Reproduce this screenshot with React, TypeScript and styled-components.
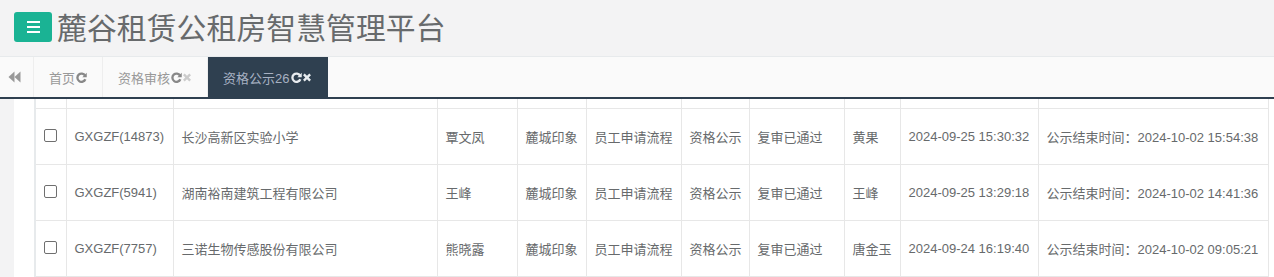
import React from "react";
import styled, { createGlobalStyle } from "styled-components";

const Global = createGlobalStyle`
  html, body { margin: 0; padding: 0; background: #ffffff; }
  body { font-family: "Liberation Sans", Arial, "Noto Sans CJK SC", sans-serif; color: #676a6c; overflow: hidden; }
  * { box-sizing: border-box; }
`;

const Page = styled.div`
  width: 1274px;
  height: 277px;
  display: flex;
  flex-direction: column;
  overflow: hidden;
`;

const Header = styled.div`
  height: 57px;
  background: #f3f3f4;
  border-bottom: 1px solid #e7eaec;
  display: flex;
  align-items: center;
  padding-left: 14px;
  padding-bottom: 2px;
  gap: 5px;
`;

const MenuButton = styled.div`
  width: 38px;
  height: 30px;
  background: #1ab394;
  border-radius: 3px;
  display: flex;
  flex-direction: column;
  align-items: center;
  justify-content: center;
  gap: 3px;
`;

const Bar = styled.span`
  display: block;
  width: 13px;
  height: 2px;
  background: #ffffff;
`;

const Title = styled.h1`
  margin: 0;
  font-family: "Noto Sans CJK SC", "Liberation Sans", sans-serif;
  font-weight: 400;
  font-size: 29.8px;
  letter-spacing: 0.1px;
  color: #676a6c;
  line-height: 1;
`;

const TabBar = styled.div`
  height: 42px;
  background: #fafafa;
  border-bottom: 2px solid #2f4050;
  display: flex;
`;

const BackButton = styled.div`
  width: 34px;
  border-right: 1px solid #eee;
  display: flex;
  align-items: center;
  justify-content: center;
  padding-right: 4px;
  color: #999;
`;

const Tab = styled.div<{ $active?: boolean }>`
  display: flex;
  align-items: center;
  padding: 0 15px;
  font-size: 13px;
  color: ${(p) => (p.$active ? "#a7b1c2" : "#999")};
  background: ${(p) => (p.$active ? "#2f4050" : "transparent")};
  border-right: 1px solid ${(p) => (p.$active ? "#2f4050" : "#eee")};
`;

const TabLabel = styled.span`
  font-family: "Liberation Sans", "Noto Sans CJK SC", sans-serif;
  margin-right: 1px;
`;

const Content = styled.div`
  flex: 1;
  display: flex;
  background: #f3f3f4;
`;

const Panel = styled.div`
  flex: 1;
  background: #ffffff;
  margin-left: 14px;
  padding-left: 20px;
`;

const Table = styled.table`
  border-collapse: collapse;
  table-layout: fixed;
  width: 1233px;
  font-size: 13px;
  color: #676a6c;
  border-left: 2px solid #e7eaec;
`;

const Td = styled.td<{ $top?: boolean }>`
  border: 1px solid #e7e7e7;
  height: ${(p) => (p.$top ? "9px" : "56px")};
  padding: 0 8px;
  white-space: nowrap;
  overflow: hidden;
  vertical-align: middle;
  font-family: "Liberation Sans", "Noto Sans CJK SC", sans-serif;
  border-top: ${(p) => (p.$top ? "none" : "1px solid #e7e7e7")};
`;

const Check = styled.span`
  display: block;
  width: 13px;
  height: 13px;
  border: 1px solid #6f6f6f;
  border-radius: 2px;
  margin: 0 0 2px 0;
`;

const Refresh = ({ color }: { color: string }) => (
  <svg width="11" height="11" viewBox="0 0 16 16">
    <path
      d="M13.2 5.2 A6 6 0 1 0 13.6 10.6"
      fill="none"
      stroke={color}
      strokeWidth="3.4"
    />
    <path d="M15.6 1.2 L15.6 7.6 L9.2 7.6 Z" fill={color} />
  </svg>
);

const Close = ({ color }: { color: string }) => (
  <svg width="10" height="9" viewBox="0 0 10 10">
    <path d="M1.5 1.5 L8.5 8.5 M8.5 1.5 L1.5 8.5" stroke={color} strokeWidth="2.6" />
  </svg>
);

const Backward = () => (
  <svg width="13" height="12" viewBox="0 0 13 12">
    <path d="M0.5 6 L6.5 0.5 L6.5 11.5 Z" fill="#999" />
    <path d="M6.5 6 L12.5 0.5 L12.5 11.5 Z" fill="#999" />
  </svg>
);

const widths = [31, 107, 264, 80, 69, 95, 68, 95, 56, 138, 230];

const rows = [
  ["GXGZF(14873)", "长沙高新区实验小学", "覃文凤", "麓城印象", "员工申请流程", "资格公示", "复审已通过", "黄果", "2024-09-25 15:30:32", "公示结束时间：2024-10-02 15:54:38"],
  ["GXGZF(5941)", "湖南裕南建筑工程有限公司", "王峰", "麓城印象", "员工申请流程", "资格公示", "复审已通过", "王峰", "2024-09-25 13:29:18", "公示结束时间：2024-10-02 14:41:36"],
  ["GXGZF(7757)", "三诺生物传感股份有限公司", "熊晓露", "麓城印象", "员工申请流程", "资格公示", "复审已通过", "唐金玉", "2024-09-24 16:19:40", "公示结束时间：2024-10-02 09:05:21"],
];

export default function App() {
  return (
    <Page>
      <Global />
      <Header>
        <MenuButton>
          <Bar />
          <Bar />
          <Bar />
        </MenuButton>
        <Title>麓谷租赁公租房智慧管理平台</Title>
      </Header>
      <TabBar>
        <BackButton>
          <Backward />
        </BackButton>
        <Tab>
          <TabLabel>首页</TabLabel>
          <Refresh color="#888" />
        </Tab>
        <Tab>
          <TabLabel>资格审核</TabLabel>
          <Refresh color="#888" />
          <Close color="#ccc" />
        </Tab>
        <Tab $active>
          <TabLabel>资格公示26</TabLabel>
          <Refresh color="#e8ecf0" />
          <Close color="#e8ecf0" />
        </Tab>
      </TabBar>
      <Content>
        <Panel>
          <Table>
            <colgroup>
              {widths.map((w, i) => (
                <col key={i} style={{ width: w }} />
              ))}
            </colgroup>
            <tbody>
              <tr>
                {widths.map((_, i) => (
                  <Td key={i} $top />
                ))}
              </tr>
              {rows.map((r, i) => (
                <tr key={i}>
                  <Td>
                    <Check />
                  </Td>
                  {r.map((c, j) => (
                    <Td key={j}>{c}</Td>
                  ))}
                </tr>
              ))}
            </tbody>
          </Table>
        </Panel>
      </Content>
    </Page>
  );
}
